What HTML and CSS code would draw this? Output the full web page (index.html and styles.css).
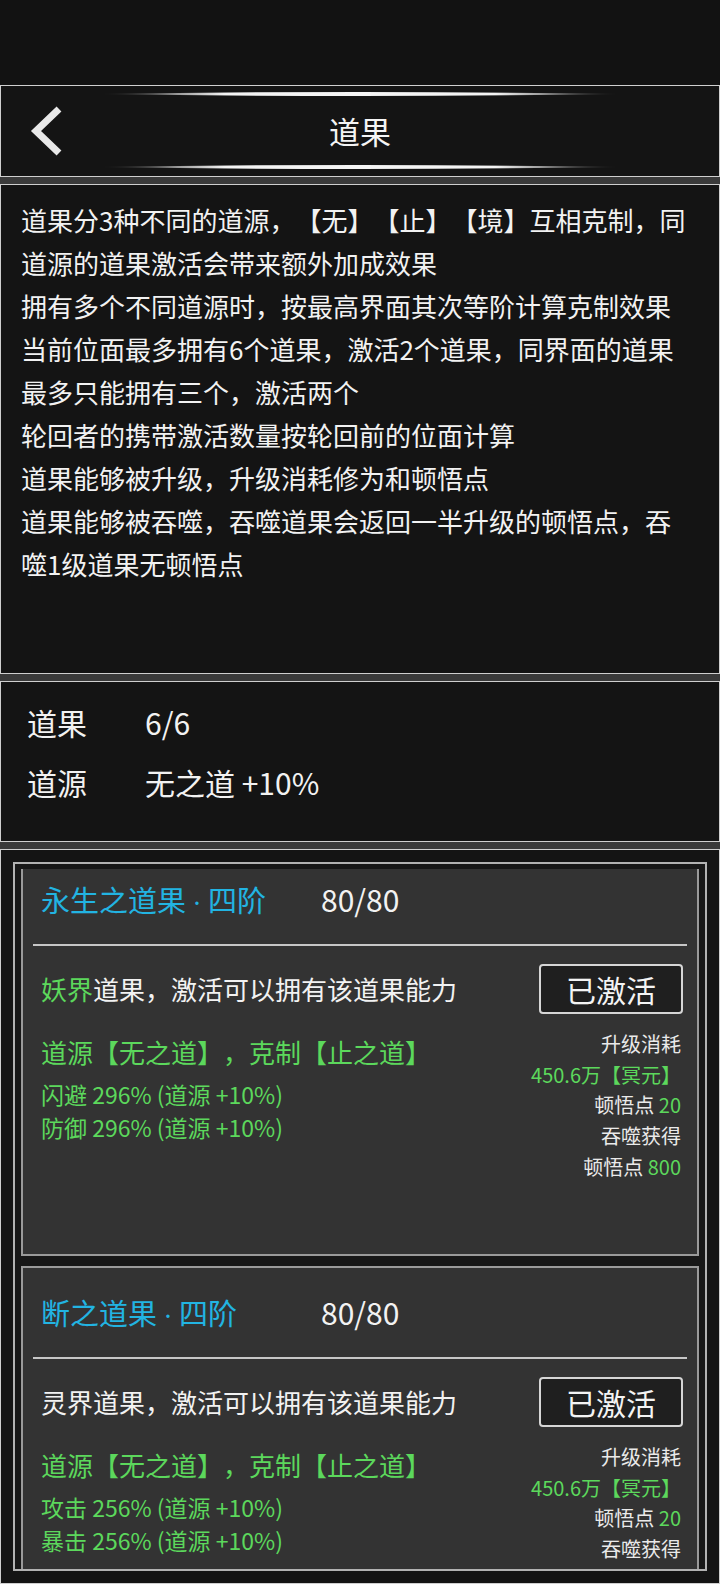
FILE: index.html
```html
<!DOCTYPE html>
<html lang="zh-CN">
<head>
<meta charset="utf-8">
<title>道果</title>
<link rel="stylesheet" href="styles.css">
</head>
<body>
<div class="screen">
  <div class="statusbar"></div>

  <header class="panel header">
    <svg class="deco" viewBox="0 0 520 4" preserveAspectRatio="none">
      <defs>
        <linearGradient id="g1" x1="0" x2="1" y1="0" y2="0">
          <stop offset="0" stop-color="#ffffff" stop-opacity="0"/>
          <stop offset="0.1" stop-color="#ffffff" stop-opacity="0.35"/>
          <stop offset="0.24" stop-color="#f4f4f4" stop-opacity="1"/>
          <stop offset="0.76" stop-color="#f4f4f4" stop-opacity="1"/>
          <stop offset="0.9" stop-color="#ffffff" stop-opacity="0.35"/>
          <stop offset="1" stop-color="#ffffff" stop-opacity="0"/>
        </linearGradient>
      </defs>
      <path d="M0 2 Q260 -2 520 2 Q260 6 0 2Z" fill="url(#g1)"/>
    </svg>
    <div class="header-row">
      <svg class="back" viewBox="0 0 36 50">
        <polyline points="31,3 8,25 31,47" fill="none" stroke="#e8e8e8" stroke-width="7" stroke-linejoin="miter"/>
      </svg>
      <h1 class="title">道果</h1>
      <span></span>
    </div>
    <svg class="deco" viewBox="0 0 520 4" preserveAspectRatio="none">
      <path d="M0 2 Q260 -2 520 2 Q260 6 0 2Z" fill="url(#g1)"/>
    </svg>
  </header>

  <div class="sep"></div>

  <section class="panel intro">
    <p>道果分3种不同的道源，【无】【止】【境】互相克制，同道源的道果激活会带来额外加成效果</p>
    <p>拥有多个不同道源时，按最高界面其次等阶计算克制效果</p>
    <p>当前位面最多拥有6个道果，激活2个道果，同界面的道果最多只能拥有三个，激活两个</p>
    <p>轮回者的携带激活数量按轮回前的位面计算</p>
    <p>道果能够被升级，升级消耗修为和顿悟点</p>
    <p>道果能够被吞噬，吞噬道果会返回一半升级的顿悟点，吞噬1级道果无顿悟点</p>
  </section>

  <div class="sep"></div>

  <section class="panel stats">
    <div class="stat-row"><span>道果</span><span>6/6</span></div>
    <div class="stat-row"><span>道源</span><span>无之道 +10%</span></div>
  </section>

  <div class="sep"></div>

  <section class="panel list-panel">
    <div class="frame">
      <div class="viewport">
        <article class="card">
          <div class="card-head">
            <span class="card-name">永生之道果<span class="dot">·</span>四阶</span>
            <span class="card-count">80/80</span>
          </div>
          <div class="divider"></div>
          <div class="card-row">
            <span class="desc"><span class="green">妖界</span>道果，激活可以拥有该道果能力</span>
            <span class="btn">已激活</span>
          </div>
          <div class="card-body">
            <div class="effects">
              <div class="source">道源【无之道】，克制【止之道】</div>
              <div class="effect">闪避 296% (道源 +10%)</div>
              <div class="effect">防御 296% (道源 +10%)</div>
            </div>
            <div class="costs">
              <div>升级消耗</div>
              <div class="green">450.6万【冥元】</div>
              <div>顿悟点 <span class="green">20</span></div>
              <div>吞噬获得</div>
              <div>顿悟点 <span class="green">800</span></div>
            </div>
          </div>
        </article>

        <article class="card">
          <div class="card-head">
            <span class="card-name">断之道果<span class="dot">·</span>四阶</span>
            <span class="card-count">80/80</span>
          </div>
          <div class="divider"></div>
          <div class="card-row">
            <span class="desc">灵界道果，激活可以拥有该道果能力</span>
            <span class="btn">已激活</span>
          </div>
          <div class="card-body">
            <div class="effects">
              <div class="source">道源【无之道】，克制【止之道】</div>
              <div class="effect">攻击 256% (道源 +10%)</div>
              <div class="effect">暴击 256% (道源 +10%)</div>
            </div>
            <div class="costs">
              <div>升级消耗</div>
              <div class="green">450.6万【冥元】</div>
              <div>顿悟点 <span class="green">20</span></div>
              <div>吞噬获得</div>
            </div>
          </div>
        </article>
      </div>
    </div>
  </section>
</div>
</body>
</html>
```

FILE: styles.css
```css
* {
  box-sizing: border-box;
  margin: 0;
  padding: 0;
}

html, body {
  background: #121212;
}

body {
  width: 720px;
  height: 1584px;
  overflow: hidden;
  font-family: "Noto Sans CJK SC", "Noto Sans", sans-serif;
  color: #f1f1f1;
  text-spacing-trim: space-all;
}

.screen {
  display: flex;
  flex-direction: column;
  height: 1584px;
}

.statusbar {
  flex: none;
  height: 85px;
  background: #121212;
}

.panel {
  flex: none;
  background: #141414;
  border: 1px solid #cfcfcf;
}

.sep {
  flex: none;
  height: 7px;
  background: #3a3a3a;
}

/* header */
.header {
  height: 92px;
  display: flex;
  flex-direction: column;
  align-items: center;
  padding: 6px 0 7px;
}

.deco {
  display: block;
  flex: none;
  width: 520px;
  height: 4px;
}

.header-row {
  flex: 1;
  width: 100%;
  display: grid;
  grid-template-columns: 1fr auto 1fr;
  align-items: center;
}

.back {
  display: block;
  width: 36px;
  height: 50px;
  margin-left: 27px;
}

.title {
  font-size: 31px;
  font-weight: 400;
  line-height: 1;
  color: #f4f4f4;
}

/* intro text */
.intro {
  height: 490px;
  padding: 13px 28px 0 20px;
  font-size: 26px;
  line-height: 43px;
  color: #f2f2f2;
}

/* stats */
.stats {
  height: 161px;
  padding: 10px 0 0 26px;
  font-size: 30px;
  line-height: 60px;
  color: #f2f2f2;
}

.stat-row {
  display: grid;
  grid-template-columns: 118px auto;
}

/* list */
.list-panel {
  flex: 1;
  padding: 12px 12px 0;
}

.frame {
  height: 709px;
  border: 2px solid #b2b2b2;
  padding: 5px 6px 0;
  background: #171717;
}

.viewport {
  height: 700px;
  overflow: hidden;
}

.card {
  height: 403px;
  border: 2px solid #9a9a9a;
  background: #333333;
  padding: 24px 10px 0;
}

.card:first-child {
  margin-top: -16px;
}

.card + .card {
  margin-top: 10px;
}

.card-head {
  display: grid;
  grid-template-columns: 280px auto;
  padding-left: 8px;
  height: 40px;
  line-height: 40px;
}

.card-name {
  font-size: 29px;
  color: #22b4e2;
  white-space: nowrap;
}

.dot {
  display: inline-block;
  width: 22px;
  text-align: center;
  font-family: "Noto Sans", "DejaVu Sans", sans-serif;
  font-size: 26px;
}

.card-count {
  font-size: 30px;
  color: #f2f2f2;
}

.divider {
  height: 2px;
  margin-top: 25px;
  background: #c6c6c6;
}

.card-row {
  display: flex;
  justify-content: space-between;
  align-items: center;
  margin-top: 18px;
  padding: 0 4px 0 8px;
}

.desc {
  font-size: 26px;
  line-height: 40px;
  color: #f2f2f2;
}

.btn {
  display: flex;
  align-items: center;
  justify-content: center;
  width: 144px;
  height: 50px;
  border: 2px solid #d6d6d6;
  border-radius: 4px;
  background: #1f1f1f;
  font-size: 30px;
  color: #f4f4f4;
}

.card-body {
  display: flex;
  justify-content: space-between;
  align-items: flex-start;
  padding: 0 6px 0 8px;
}

.effects {
  margin-top: 18px;
  color: #5cd85c;
}

.source {
  font-size: 26px;
  line-height: 40px;
  margin-bottom: 6px;
}

.effect {
  font-size: 23px;
  line-height: 33px;
}

.costs {
  margin-top: 15px;
  text-align: right;
  font-size: 20px;
  line-height: 30.7px;
  color: #eaeaea;
}

.green {
  color: #5cd85c;
}
```
